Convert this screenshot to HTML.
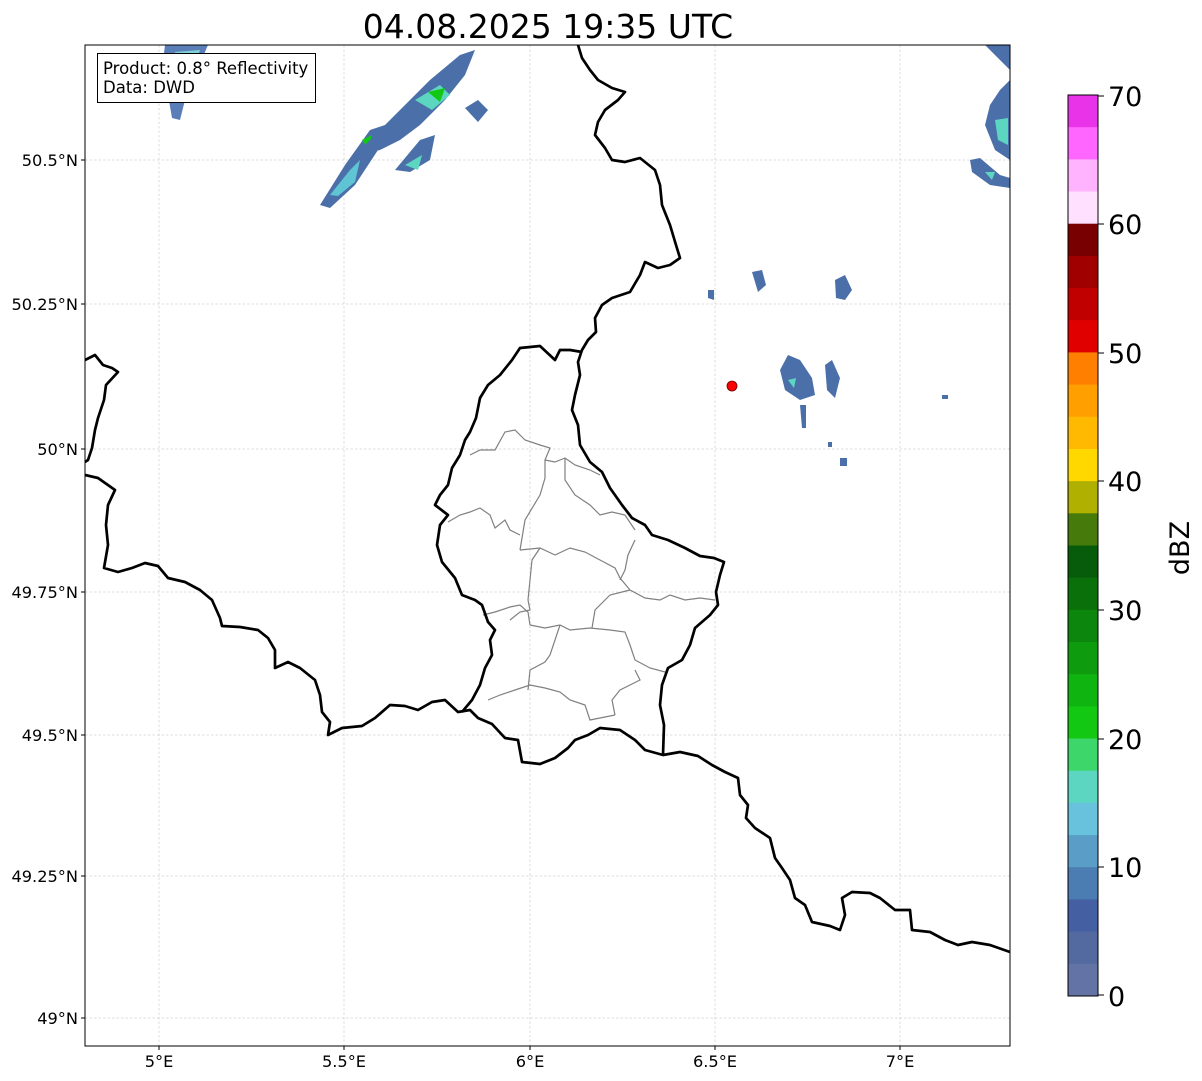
<!DOCTYPE html>
<html><head><meta charset="utf-8"><style>
html,body{margin:0;padding:0;background:#fff;}
svg{display:block;font-family:"DejaVu Sans","Liberation Sans",sans-serif;}
</style></head><body>
<svg width="1202" height="1081" viewBox="0 0 1202 1081" xmlns="http://www.w3.org/2000/svg">
<rect width="1202" height="1081" fill="#fff"/>
<text x="548" y="38" font-size="33" text-anchor="middle" fill="#000">04.08.2025 19:35 UTC</text>
<defs><clipPath id="ax"><rect x="85" y="45" width="925" height="1001"/></clipPath></defs>
<g clip-path="url(#ax)">
<g stroke="#bdbdbd" stroke-width="0.5" stroke-dasharray="2.5,2">
<line x1="159" y1="45" x2="159" y2="1046"/><line x1="344" y1="45" x2="344" y2="1046"/><line x1="530" y1="45" x2="530" y2="1046"/><line x1="715" y1="45" x2="715" y2="1046"/><line x1="900" y1="45" x2="900" y2="1046"/>
<line x1="85" y1="160" x2="1010" y2="160"/><line x1="85" y1="304" x2="1010" y2="304"/><line x1="85" y1="449" x2="1010" y2="449"/><line x1="85" y1="592" x2="1010" y2="592"/><line x1="85" y1="735" x2="1010" y2="735"/><line x1="85" y1="876" x2="1010" y2="876"/><line x1="85" y1="1018" x2="1010" y2="1018"/>
</g>
<g>
<path d="M165,45 L208,45 L195,75 L185,100 L180,120 L172,118 L168,95 L160,85 Z" fill="#5a7fb8"/>
<path d="M175,52 L200,50 L190,80 L182,95 L176,80 Z" fill="#7fd0d8"/>
<path d="M178,58 L192,56 L186,75 Z" fill="#2fcf5a"/>
<path d="M320,205 L345,165 L370,130 L385,125 L378,150 L355,185 L330,208 Z" fill="#4b6fa8"/>
<path d="M330,195 L350,170 L360,160 L355,182 L338,196 Z" fill="#5fc4d4"/>
<path d="M362,140 L372,135 L368,148 Z" fill="#12c812"/>
<path d="M355,155 L400,110 L430,80 L460,55 L475,50 L465,75 L445,100 L420,125 L400,140 L380,150 Z" fill="#4b6fa8"/>
<path d="M415,100 L440,85 L450,95 L432,110 Z" fill="#5dd6c1"/>
<path d="M428,92 L445,88 L440,102 Z" fill="#12c812"/>
<path d="M395,170 L420,140 L435,135 L430,160 L410,172 Z" fill="#4b6fa8"/>
<path d="M405,165 L422,155 L418,170 Z" fill="#5dd6c1"/>
<path d="M465,108 L478,100 L488,110 L478,122 Z" fill="#4b6fa8"/>
<path d="M985,45 L1010,45 L1010,70 L995,55 Z" fill="#4b6fa8"/>
<path d="M1000,90 L1010,80 L1010,160 L995,150 L985,125 L990,105 Z" fill="#4b6fa8"/>
<path d="M995,120 L1008,118 L1008,145 L998,140 Z" fill="#5dd6c1"/>
<path d="M970,160 L980,158 L1000,175 L1010,178 L1010,188 L990,185 L972,172 Z" fill="#4b6fa8"/>
<path d="M985,172 L995,172 L992,180 Z" fill="#5dd6c1"/>
<path d="M780,370 L788,355 L800,360 L812,378 L815,395 L800,400 L785,390 Z" fill="#4b6fa8"/>
<path d="M788,380 L796,378 L794,388 Z" fill="#5dd6c1"/>
<path d="M800,405 L806,405 L806,428 L802,428 Z" fill="#4b6fa8"/>
<path d="M825,365 L832,360 L840,378 L835,398 L827,390 Z" fill="#4b6fa8"/>
<path d="M835,280 L845,275 L852,290 L845,300 L836,298 Z" fill="#4b6fa8"/>
<path d="M752,272 L762,270 L766,285 L758,292 Z" fill="#4b6fa8"/>
<path d="M708,290 L714,290 L714,300 L708,298 Z" fill="#4b6fa8"/>
<rect x="840" y="458" width="7" height="8" fill="#4b6fa8"/>
<rect x="942" y="395" width="6" height="4" fill="#4b6fa8"/>
<rect x="828" y="442" width="4" height="5" fill="#4b6fa8"/>
</g>
<g fill="none" stroke="#808080" stroke-width="1.2">
<path d="M470,455 L480,450 L495,450 L505,432 L515,430 L525,440 L540,445 L550,448 L545,460 L545,478 L540,495 L525,520 L520,550"/>
<path d="M448,522 L460,515 L470,512 L480,508 L490,515 L495,528 L505,520 L510,530 L520,535"/>
<path d="M545,460 L555,462 L565,458 L575,465 L590,470 L600,475"/>
<path d="M565,458 L565,480 L575,495 L590,505 L600,515 L612,512 L625,515 L635,530"/>
<path d="M520,550 L540,548 L555,555 L570,548 L585,552 L600,560 L615,568 L620,578 L630,590"/>
<path d="M540,548 L532,560 L530,580 L528,600 L530,610 L520,612 L510,620"/>
<path d="M635,540 L628,555 L625,570 L620,580"/>
<path d="M483,615 L495,612 L510,607 L520,605 L528,612 L530,625"/>
<path d="M530,625 L545,628 L560,625 L570,630 L590,628 L610,630 L625,632 L630,645 L635,660 L650,668 L665,672"/>
<path d="M630,590 L645,598 L660,600 L670,595 L685,600 L700,598 L715,600"/>
<path d="M630,590 L610,595 L595,610 L592,628"/>
<path d="M560,625 L555,640 L550,655 L545,662 L530,670 L528,690"/>
<path d="M488,700 L500,695 L515,690 L530,685 L545,688 L560,692 L570,700 L585,705 L590,720 L600,718 L615,715"/>
<path d="M615,715 L612,700 L620,690 L630,685 L640,680 L635,670"/>
</g>
<g fill="none" stroke="#000" stroke-width="2.7" stroke-linejoin="round">
<path d="M578,45 L582,58 L590,70 L598,80 L612,88 L625,92 L618,100 L605,110 L598,122 L595,135 L605,148 L612,160 L625,162 L640,158 L655,170 L660,185 L662,205 L670,225 L676,245 L680,258 L670,265 L658,268 L645,262 L640,275 L630,292 L612,298 L602,305 L595,318 L596,332 L588,340 L582,350 L578,362 L580,375 L575,395 L572,410 L578,425 L580,445 L590,462 L602,472 L610,488 L622,505 L632,518 L645,525 L652,535 L668,540 L685,548 L700,556 L714,558 L724,562 L720,575 L716,592 L718,605 L710,615 L695,628 L690,645 L682,660 L668,668 L662,685 L660,705 L664,725 L663,755"/>
<path d="M582,352 L570,350 L560,350 L555,360 L540,346 L520,348 L512,360 L500,375 L488,385 L480,398 L476,418 L470,432 L465,440 L460,455 L452,468 L448,485 L440,495 L435,505 L448,515 L440,525 L437,545 L442,562 L455,578 L462,595 L475,600 L482,605 L488,622 L495,630 L490,640 L492,655 L485,668 L480,685 L472,700 L462,712"/>
<path d="M85,475 L98,478 L115,490 L108,505 L106,525 L108,545 L104,568 L118,572 L132,568 L145,563 L158,566 L168,578 L185,582 L200,590 L212,600 L220,618 L222,626 L240,627 L258,630 L268,638 L275,650 L275,668 L288,662 L300,668 L315,680 L320,695 L322,712 L330,722 L328,735 L342,728 L362,726 L375,718 L390,705 L405,706 L418,710 L432,702 L445,700 L458,712 L470,710 L478,718 L492,724 L505,738 L518,740 L522,762 L540,764 L555,758 L568,748 L575,740 L588,735 L600,728 L620,730 L635,740 L645,750 L663,755 L680,752 L698,756 L712,765 L725,772 L738,778 L740,795 L748,805 L746,818 L755,828 L770,838 L775,858 L782,868 L790,880 L795,898 L805,905 L812,922 L830,926 L840,930 L845,915 L842,898 L852,892 L870,893 L880,898 L895,910 L910,910 L912,930 L930,932 L945,940 L958,945 L972,942 L990,945 L1010,952"/>
<path d="M85,360 L95,355 L103,365 L112,368 L118,372 L106,385 L104,400 L98,418 L95,430 L92,448 L88,460 L85,462"/>
</g>
<circle cx="732" cy="386" r="5" fill="#f00" stroke="#600" stroke-width="0.8"/>
</g>
<rect x="85" y="45" width="925" height="1001" fill="none" stroke="#000" stroke-width="1"/>
<rect x="97.5" y="53.5" width="218" height="49" fill="#fff" stroke="#000" stroke-width="1"/>
<text x="103" y="74" font-size="16.5">Product: 0.8° Reflectivity</text>
<text x="103" y="93" font-size="16.5">Data: DWD</text>
<g font-size="16.2" fill="#000">
<g text-anchor="end">
<text x="78" y="166">50.5°N</text><text x="78" y="310">50.25°N</text><text x="78" y="455">50°N</text><text x="78" y="598">49.75°N</text><text x="78" y="741">49.5°N</text><text x="78" y="882">49.25°N</text><text x="78" y="1024">49°N</text>
</g>
<g text-anchor="middle">
<text x="159" y="1067">5°E</text><text x="344" y="1067">5.5°E</text><text x="530" y="1067">6°E</text><text x="715" y="1067">6.5°E</text><text x="900" y="1067">7°E</text>
</g>
</g>
<g stroke="#000"><line x1="159" y1="1046" x2="159" y2="1050"/><line x1="344" y1="1046" x2="344" y2="1050"/><line x1="530" y1="1046" x2="530" y2="1050"/><line x1="715" y1="1046" x2="715" y2="1050"/><line x1="900" y1="1046" x2="900" y2="1050"/>
<line x1="81" y1="160" x2="85" y2="160"/><line x1="81" y1="304" x2="85" y2="304"/><line x1="81" y1="449" x2="85" y2="449"/><line x1="81" y1="592" x2="85" y2="592"/><line x1="81" y1="735" x2="85" y2="735"/><line x1="81" y1="876" x2="85" y2="876"/><line x1="81" y1="1018" x2="85" y2="1018"/></g>
<g>
<rect x="1068" y="95.0" width="30" height="32.6" fill="#e833e8"/>
<rect x="1068" y="127.2" width="30" height="32.6" fill="#ff66ff"/>
<rect x="1068" y="159.4" width="30" height="32.6" fill="#ffb3ff"/>
<rect x="1068" y="191.5" width="30" height="32.6" fill="#ffe0ff"/>
<rect x="1068" y="223.7" width="30" height="32.6" fill="#780000"/>
<rect x="1068" y="255.9" width="30" height="32.6" fill="#a00000"/>
<rect x="1068" y="288.1" width="30" height="32.6" fill="#c00000"/>
<rect x="1068" y="320.2" width="30" height="32.6" fill="#e00000"/>
<rect x="1068" y="352.4" width="30" height="32.6" fill="#ff8000"/>
<rect x="1068" y="384.6" width="30" height="32.6" fill="#ff9f00"/>
<rect x="1068" y="416.8" width="30" height="32.6" fill="#ffb900"/>
<rect x="1068" y="449.0" width="30" height="32.6" fill="#ffd800"/>
<rect x="1068" y="481.1" width="30" height="32.6" fill="#b0b000"/>
<rect x="1068" y="513.3" width="30" height="32.6" fill="#467a0a"/>
<rect x="1068" y="545.5" width="30" height="32.6" fill="#065c0a"/>
<rect x="1068" y="577.7" width="30" height="32.6" fill="#0a710a"/>
<rect x="1068" y="609.8" width="30" height="32.6" fill="#0c860c"/>
<rect x="1068" y="642.0" width="30" height="32.6" fill="#0e9c0e"/>
<rect x="1068" y="674.2" width="30" height="32.6" fill="#10b410"/>
<rect x="1068" y="706.4" width="30" height="32.6" fill="#12c812"/>
<rect x="1068" y="738.5" width="30" height="32.6" fill="#3dd66b"/>
<rect x="1068" y="770.7" width="30" height="32.6" fill="#5dd6c1"/>
<rect x="1068" y="802.9" width="30" height="32.6" fill="#68c2dd"/>
<rect x="1068" y="835.1" width="30" height="32.6" fill="#5a9ec8"/>
<rect x="1068" y="867.2" width="30" height="32.6" fill="#4b7db3"/>
<rect x="1068" y="899.4" width="30" height="32.6" fill="#4460a3"/>
<rect x="1068" y="931.6" width="30" height="32.6" fill="#526a9f"/>
<rect x="1068" y="963.8" width="30" height="32.2" fill="#6473a6"/>
<rect x="1068" y="95" width="30" height="901" fill="none" stroke="#000" stroke-width="1"/>
<g stroke="#000"><line x1="1098" y1="96" x2="1104" y2="96"/><line x1="1098" y1="224" x2="1104" y2="224"/><line x1="1098" y1="353" x2="1104" y2="353"/><line x1="1098" y1="481" x2="1104" y2="481"/><line x1="1098" y1="610" x2="1104" y2="610"/><line x1="1098" y1="739" x2="1104" y2="739"/><line x1="1098" y1="867" x2="1104" y2="867"/><line x1="1098" y1="995" x2="1104" y2="995"/></g>
<g font-size="27" fill="#000">
<text x="1108" y="106">70</text><text x="1108" y="234">60</text><text x="1108" y="363">50</text><text x="1108" y="491">40</text><text x="1108" y="620">30</text><text x="1108" y="749">20</text><text x="1108" y="877">10</text><text x="1108" y="1006">0</text>
</g>
<text x="1189" y="548" font-size="27" text-anchor="middle" transform="rotate(-90 1189 548)">dBZ</text>
</g>
</svg>
</body></html>
